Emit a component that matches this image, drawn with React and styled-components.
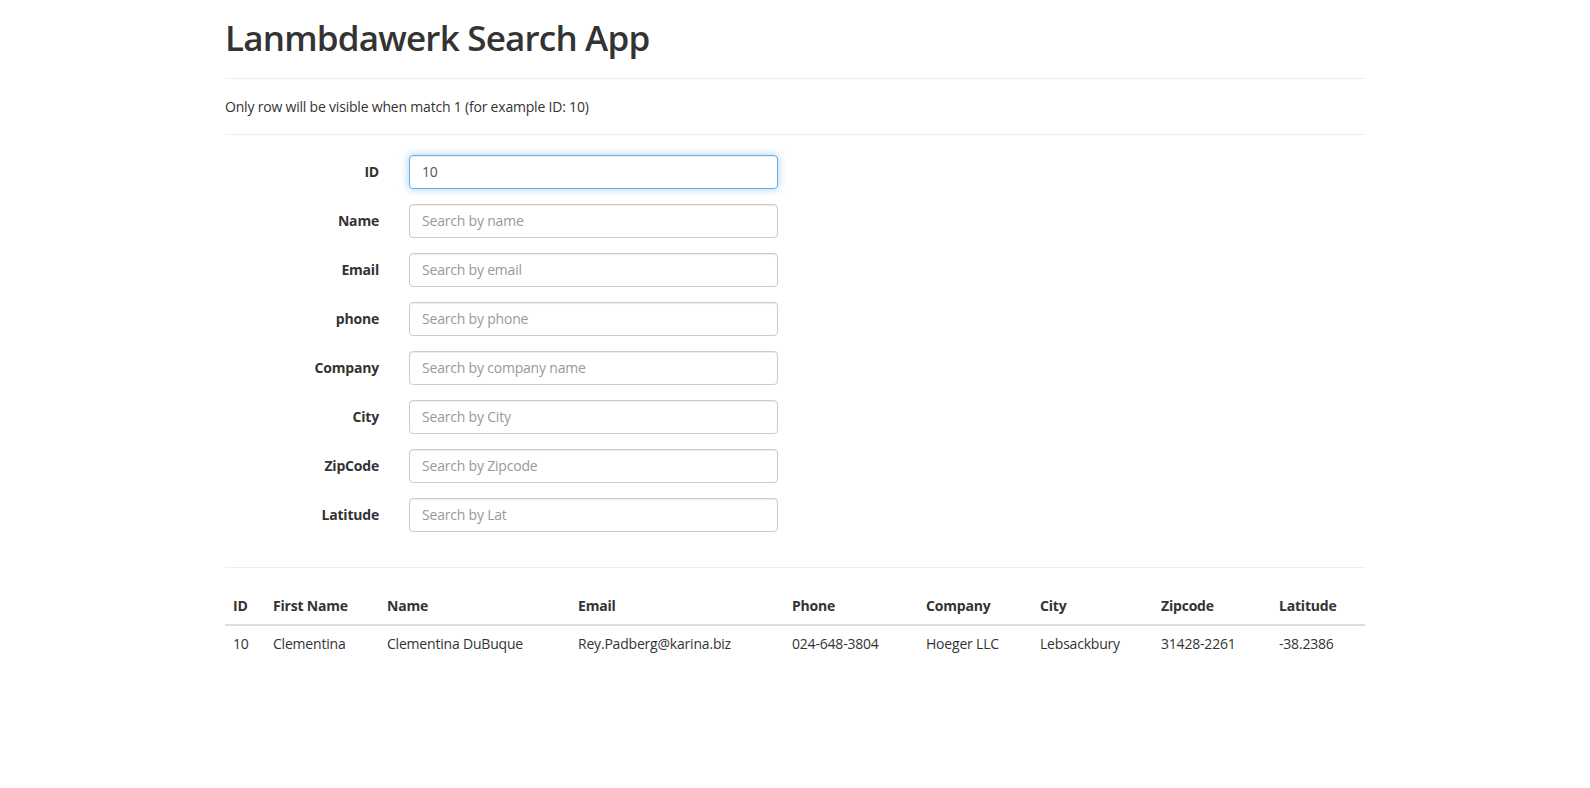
import React from 'react';
import styled, { createGlobalStyle, css } from 'styled-components';

const Global = createGlobalStyle`
  html, body { margin: 0; padding: 0; background: #fff; }
  body {
    font-family: "Open Sans", "Noto Sans", sans-serif;
    font-size: 14px;
    line-height: 1.42857143;
    letter-spacing: -0.2px;
    color: #333;
  }
  *, *::before, *::after { box-sizing: border-box; }
`;

const Container = styled.div`
  width: 1170px;
  margin: 0 auto;
  padding: 0 15px;
`;

const Title = styled.h1`
  font-size: 35px;
  font-weight: 600;
  letter-spacing: -0.8px;
  line-height: 1.1;
  margin: 19px 0 10px;
  color: #333;
`;

const Rule = styled.hr`
  height: 0;
  margin: 20px 0;
  border: 0;
  border-top: 1px solid #eee;
`;

const Note = styled.h5`
  font-size: 14px;
  font-weight: 500;
  line-height: 1.1;
  margin: 10px 0;
  color: #333;
`;

const Form = styled.form`
  display: flow-root;
  margin: 0;
`;

const FormRow = styled.div`
  display: flex;
  align-items: flex-start;
  margin-bottom: 15px;
`;

const Label = styled.label`
  width: 154px;
  margin-right: 30px;
  padding-top: 7px;
  text-align: right;
  font-weight: 700;
  line-height: 20px;
`;

const Input = styled.input`
  display: block;
  width: 369px;
  height: 34px;
  padding: 6px 12px;
  font-family: inherit;
  font-size: 14px;
  letter-spacing: inherit;
  line-height: 1.42857143;
  color: #555;
  background: #fff;
  border: 1px solid #ccc;
  border-radius: 4px;
  box-shadow: inset 0 1px 1px rgba(0, 0, 0, 0.075);
  outline: 0;
  &::placeholder { color: #999; opacity: 1; }
  ${(p) =>
    p.$focused &&
    css`
      border-color: #66afe9;
      box-shadow: inset 0 1px 1px rgba(0, 0, 0, 0.075), 0 0 8px rgba(102, 175, 233, 0.6);
    `}
`;

const Table = styled.table`
  width: 100%;
  table-layout: fixed;
  border-collapse: collapse;
  border-spacing: 0;
  margin-bottom: 20px;
`;

const Th = styled.th`
  padding: 8px;
  text-align: left;
  vertical-align: bottom;
  font-weight: 700;
  line-height: 20px;
  border-bottom: 2px solid #ddd;
  white-space: nowrap;
`;

const Td = styled.td`
  padding: 8px;
  vertical-align: top;
  line-height: 20px;
  border-top: 1px solid #ddd;
  white-space: nowrap;
`;

const fields = [
  { label: 'ID', placeholder: '', value: '10', focused: true },
  { label: 'Name', placeholder: 'Search by name' },
  { label: 'Email', placeholder: 'Search by email' },
  { label: 'phone', placeholder: 'Search by phone' },
  { label: 'Company', placeholder: 'Search by company name' },
  { label: 'City', placeholder: 'Search by City' },
  { label: 'ZipCode', placeholder: 'Search by Zipcode' },
  { label: 'Latitude', placeholder: 'Search by Lat' },
];

const columns = [
  { title: 'ID', width: 40 },
  { title: 'First Name', width: 114 },
  { title: 'Name', width: 191 },
  { title: 'Email', width: 214 },
  { title: 'Phone', width: 134 },
  { title: 'Company', width: 114 },
  { title: 'City', width: 121 },
  { title: 'Zipcode', width: 118 },
  { title: 'Latitude', width: 94 },
];

const rows = [
  ['10', 'Clementina', 'Clementina DuBuque', 'Rey.Padberg@karina.biz', '024-648-3804', 'Hoeger LLC', 'Lebsackbury', '31428-2261', '-38.2386'],
];

export default function App() {
  return (
    <>
      <Global />
      <Container>
        <Title>Lanmbdawerk Search App</Title>
        <Rule />
        <Note>Only row will be visible when match 1 (for example ID: 10)</Note>
        <Rule />
        <Form onSubmit={(e) => e.preventDefault()}>
          {fields.map((f) => (
            <FormRow key={f.label}>
              <Label>{f.label}</Label>
              <Input
                type="text"
                placeholder={f.placeholder}
                defaultValue={f.value}
                $focused={f.focused}
                autoFocus={f.focused}
              />
            </FormRow>
          ))}
        </Form>
        <Rule />
        <Table>
          <colgroup>
            {columns.map((c) => (
              <col key={c.title} style={{ width: c.width }} />
            ))}
          </colgroup>
          <thead>
            <tr>
              {columns.map((c) => (
                <Th key={c.title}>{c.title}</Th>
              ))}
            </tr>
          </thead>
          <tbody>
            {rows.map((r) => (
              <tr key={r[0]}>
                {r.map((cell, i) => (
                  <Td key={i}>{cell}</Td>
                ))}
              </tr>
            ))}
          </tbody>
        </Table>
      </Container>
    </>
  );
}
